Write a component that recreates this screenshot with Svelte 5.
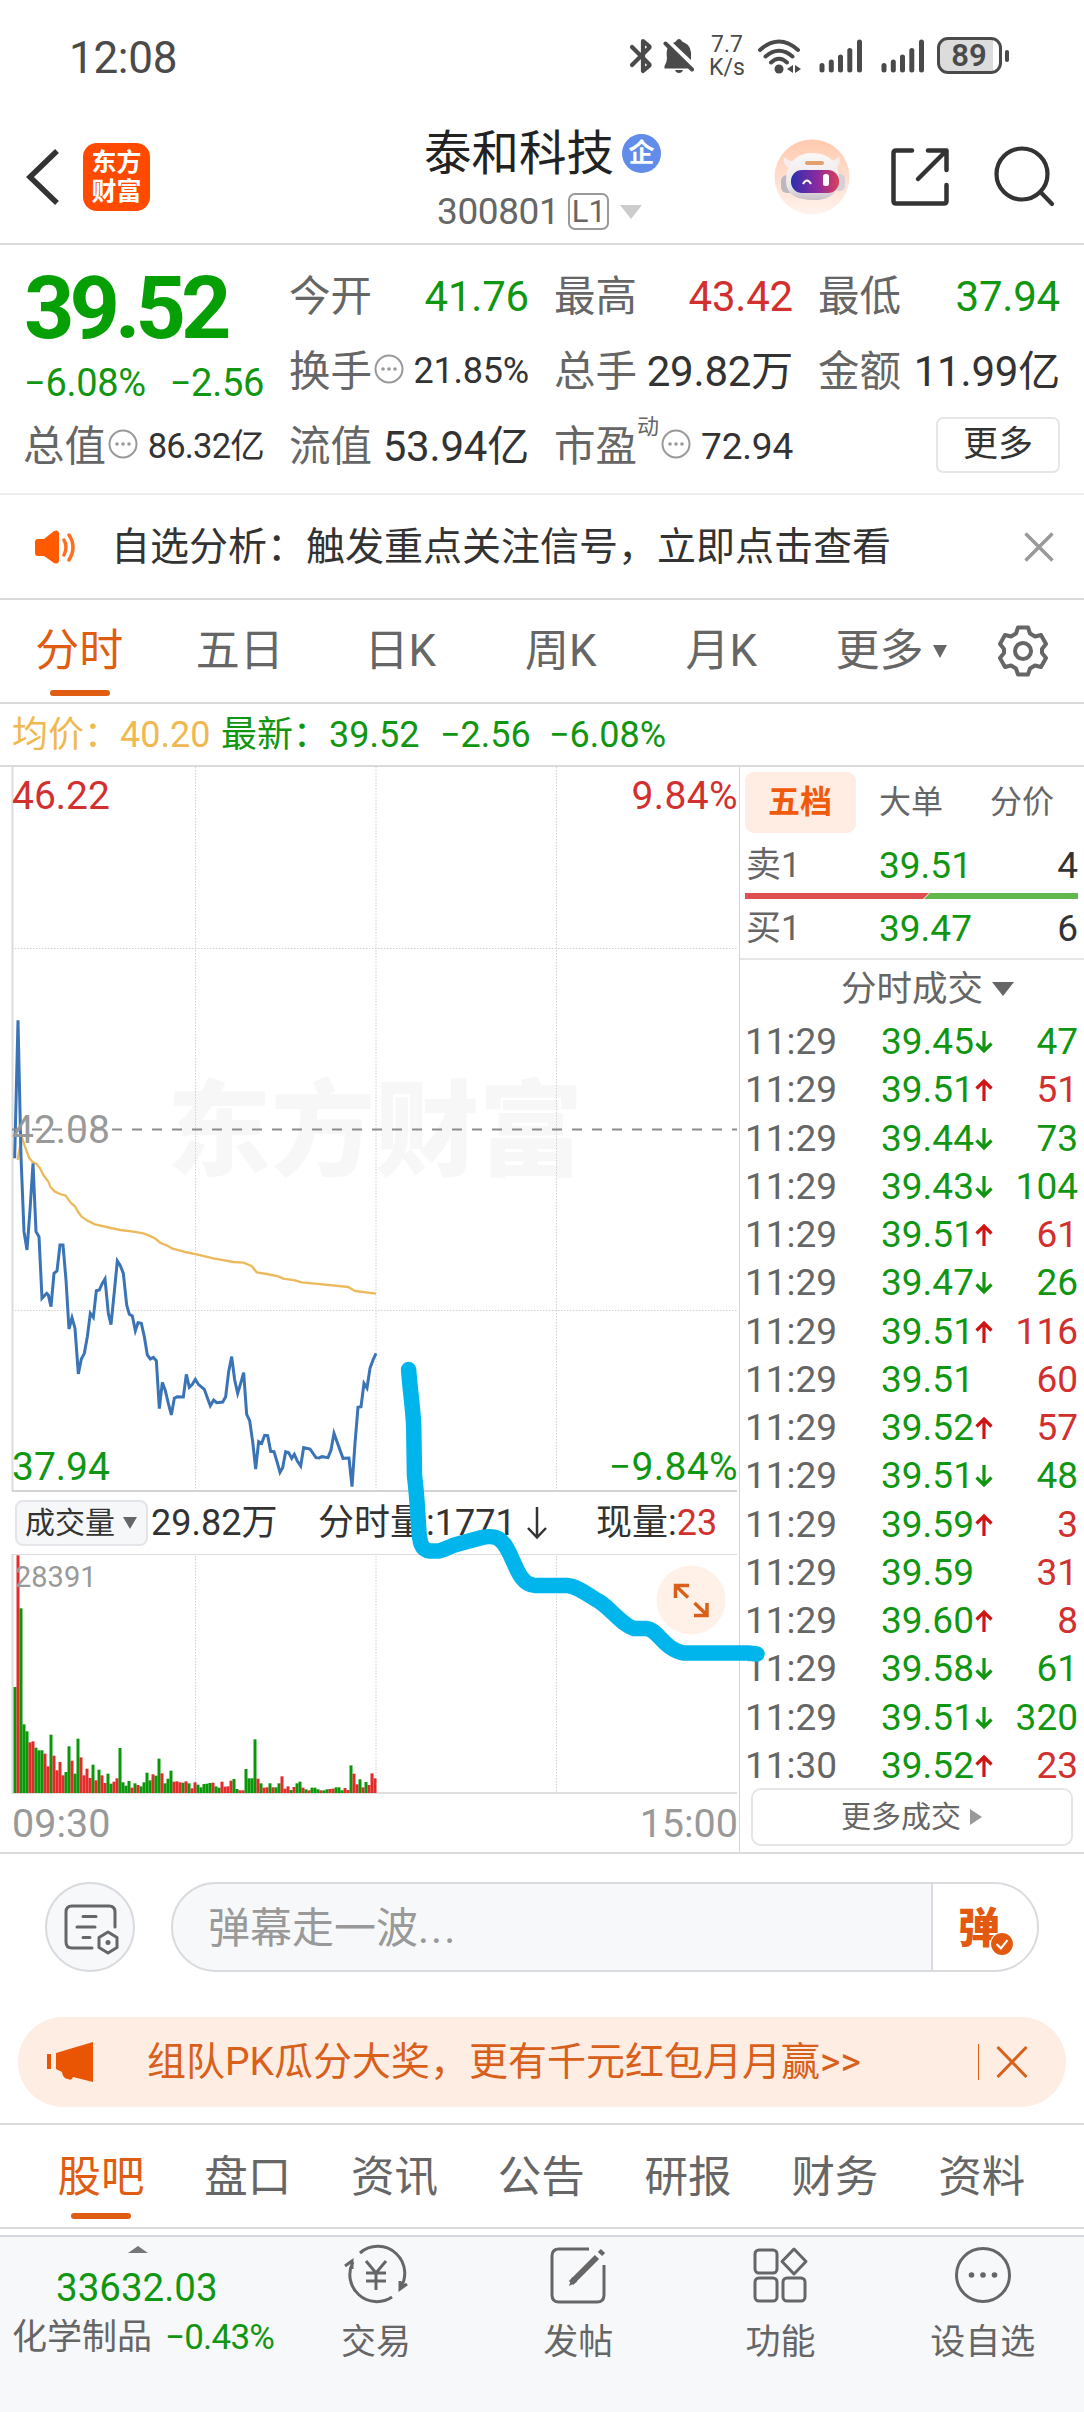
<script lang="ts">
    type Trade = [string, string, string, string, string];

    const stats = [
        { label: '今开', value: '41.76', color: 'down' },
        { label: '最高', value: '43.42', color: 'up' },
        { label: '最低', value: '37.94', color: 'down' },
        { label: '换手', value: '21.85%', color: 'small', info: true },
        { label: '总手', value: '29.82万', color: '' },
        { label: '金额', value: '11.99亿', color: '' }
    ];

    const periods = ['分时', '五日', '日K', '周K', '月K'];
    const sections = ['股吧', '盘口', '资讯', '公告', '研报', '财务', '资料'];

    // time, price, direction, volume, volume color
    const trades: Trade[] = [
        ['11:29', '39.45', 'd', '47', 'down'],
        ['11:29', '39.51', 'u', '51', 'up'],
        ['11:29', '39.44', 'd', '73', 'down'],
        ['11:29', '39.43', 'd', '104', 'down'],
        ['11:29', '39.51', 'u', '61', 'up'],
        ['11:29', '39.47', 'd', '26', 'down'],
        ['11:29', '39.51', 'u', '116', 'up'],
        ['11:29', '39.51', '', '60', 'up'],
        ['11:29', '39.52', 'u', '57', 'up'],
        ['11:29', '39.51', 'd', '48', 'down'],
        ['11:29', '39.59', 'u', '3', 'up'],
        ['11:29', '39.59', '', '31', 'up'],
        ['11:29', '39.60', 'u', '8', 'up'],
        ['11:29', '39.58', 'd', '61', 'down'],
        ['11:29', '39.51', 'd', '320', 'down'],
        ['11:30', '39.52', 'u', '23', 'up']
    ];

    // both lines are stored at three units per pixel
    const priceLine = '44,535 54,121 63,530 72,755 81,810 90,690 99,550 108,755 117,770 126,955 140,940 145,945 153,980 162,880 171,873 180,795 189,795 198,900 207,1047 216,1013 225,1045 235,1182 244,1137 253,1120 262,1070 271,1000 280,1012 289,932 298,930 306,912 315,897 325,1000 333,1034 343,935 352,843 361,857 370,880 380,975 388,1003 397,1008 406,1052 414,1028 424,1030 433,1070 442,1125 451,1137 460,1132 469,1142 478,1286 487,1207 496,1232 505,1270 514,1305 523,1255 532,1250 550,1251 559,1183 568,1222 577,1213 586,1198 595,1213 613,1228 622,1253 631,1277 641,1260 650,1268 668,1266 677,1250 686,1175 695,1130 704,1200 713,1240 722,1210 731,1178 740,1303 749,1322 758,1385 767,1467 776,1385 785,1390 794,1366 803,1367 812,1414 822,1415 831,1445 840,1477 848,1463 857,1415 866,1418 875,1435 883,1423 892,1443 902,1458 911,1403 930,1407 948,1433 957,1434 966,1430 984,1433 993,1410 1002,1360 1011,1385 1029,1435 1047,1434 1056,1520 1065,1390 1074,1282 1083,1280 1092,1210 1101,1224 1110,1165 1119,1140 1128,1120';
    const avgLine = '53,540 60,500 65,470 75,500 88,535 97,545 110,552 120,565 130,585 145,605 152,622 165,635 180,642 197,647 212,668 225,679 235,697 245,710 262,722 285,733 320,741 360,750 400,755 430,760 448,767 465,775 482,789 500,796 518,806 555,816 590,823 640,835 700,846 730,848 755,858 770,877 800,882 835,889 850,896 885,901 905,907 945,911 1045,921 1065,933 1128,941';

    const volumes = 'g318 r713 g554 g206 g185 r152 r155 g136 g128 g128 r118 r80 g175 r112 r68 r93 r53 g63 g140 r97 g58 g163 r107 r53 r73 r45 g85 r38 g70 r53 r30 g58 g28 r34 r44 g135 g32 g22 g36 r16 g29 r24 g20 g32 g61 g38 r56 g52 g103 r59 g29 g43 g67 r34 r35 r32 g31 r35 g29 r14 r32 g25 g17 g27 g28 g30 r31 g20 g16 r34 r19 r20 r37 g42 g12 r8 r8 g72 g44 g44 g161 r43 g29 r16 r17 g29 r17 g17 g29 r50 r13 r20 g9 r18 g29 g34 r16 g11 r8 g16 g16 g11 r8 g8 g11 r12 r13 g17 g17 g8 r15 r9 g83 r58 r26 g41 r17 g33 r24 r59 r44'
        .split(' ')
        .map((v, i) => ({
            x: 13.5 + i * 3,
            h: Number(v.slice(1)) / 3,
            fill: v[0] === 'g' ? '#0a980a' : '#e32b2b'
        }));
</script>

{#snippet info()}
    <svg class="info" width="30" height="30" viewBox="0 0 30 30">
        <circle cx="15" cy="15" r="13.5" fill="none" stroke="#999" stroke-width="2" />
        <circle cx="9" cy="15" r="1.8" fill="#999" />
        <circle cx="15" cy="15" r="1.8" fill="#999" />
        <circle cx="21" cy="15" r="1.8" fill="#999" />
    </svg>
{/snippet}

{#snippet signal()}
    <svg width="44" height="34" viewBox="0 0 44 34" stroke="#4a4a4a" stroke-width="5" stroke-linecap="round">
        <path d="M3 26.500V31M12.300 23V31M21.500 18V31M30.800 11.500V31M40.500 3V31" />
    </svg>
{/snippet}

<main>
    <div class="statusbar">
        <span class="clock">12:08</span>
        <div class="status-icons">
            <svg class="bt" width="24" height="36" viewBox="0 0 24 36" fill="none" stroke="#4a4a4a" stroke-width="4.200" stroke-linecap="round" stroke-linejoin="round">
                <path d="M3 9L20 26Q21 27 20 28L14 33V3L20 8Q21 9 20 10L3 27" />
            </svg>
            <svg class="bell" width="32" height="36" viewBox="0 0 32 36">
                <path d="M5 9Q3 13 4 20Q4 24 1.500 28V30.500H27Z" fill="#4a4a4a" />
                <path d="M10 5Q13 4 14 2Q16 0 18 2Q19 4 22 5Q29 8 28 20V22Z" fill="#4a4a4a" />
                <path d="M12 32H20Q19 35 16 35Q13 35 12 32Z" fill="#4a4a4a" />
                <path d="M2.500 5.500L29 31.500" stroke="#4a4a4a" stroke-width="4" stroke-linecap="round" />
            </svg>
            <div class="speed"><span>7.7</span><span>K/s</span></div>
            <svg class="wifi" width="46" height="36" viewBox="0 0 46 36" fill="none" stroke="#4a4a4a" stroke-width="4" stroke-linecap="round">
                <path d="M3 12Q22 -5 41 12M8.500 18.500Q22 7 35.500 18.500M14 24.500Q22 17 30 24.500" />
                <circle cx="22" cy="31" r="4.500" fill="#4a4a4a" stroke="none" />
                <path d="M30 31L36 27V35ZM38 27L44 31L38 35Z" fill="#4a4a4a" stroke="none" />
            </svg>
            <span class="sig1">{@render signal()}</span>
            <span class="sig2">{@render signal()}</span>
            <div class="battery"><span>89</span></div>
            <i class="nub"></i>
        </div>
    </div>

    <header>
        <svg class="back" width="36" height="60" viewBox="0 0 36 60" fill="none" stroke="#333" stroke-width="5.500">
            <path d="M33 4L6 30L33 56" />
        </svg>
        <div class="logo"><span>东方</span><span>财富</span></div>
        <div class="title">
            <div class="name">泰和科技<b>企</b></div>
            <div class="code">300801<em>L1</em><i></i></div>
        </div>
        <svg class="robot" width="76" height="76" viewBox="0 0 76 76">
            <defs>
                <linearGradient id="halo" x1="0" y1="0" x2="0" y2="1">
                    <stop offset="0" stop-color="#ffc9ae" />
                    <stop offset="1" stop-color="#fff3ed" />
                </linearGradient>
                <linearGradient id="visor" x1="0" y1="0" x2="1" y2="0">
                    <stop offset="0" stop-color="#2b2fae" />
                    <stop offset=".55" stop-color="#8b2aa0" />
                    <stop offset="1" stop-color="#dc4058" />
                </linearGradient>
                <linearGradient id="shell" x1="0" y1="0" x2="0" y2="1">
                    <stop offset="0" stop-color="#fbf8f8" />
                    <stop offset=".7" stop-color="#eae6ea" />
                    <stop offset="1" stop-color="#c9c0c6" />
                </linearGradient>
            </defs>
            <circle cx="38" cy="38" r="37.500" fill="url(#halo)" />
            <path d="M10 18Q8 26 17 31L24 22Q14 23 10 18ZM65 17Q68 26 60 31L52 21Q62 23 65 17Z" fill="#f6eeee" />
            <rect x="7" y="36" width="14" height="18" rx="6" fill="#bdb7c0" />
            <rect x="60" y="35" width="11" height="17" rx="5" fill="#d6cfd5" />
            <path d="M38 14C56 14 65 25 65 40C65 54 56 61 40 61C22 61 12 55 12 42C12 25 22 14 38 14Z" fill="url(#shell)" />
            <rect x="17" y="31" width="48" height="23" rx="11" fill="url(#visor)" />
            <path d="M29 45Q33 38 37 45" fill="none" stroke="#fff" stroke-width="2" />
            <rect x="49" y="35" width="6" height="12" rx="2.500" fill="#fff" />
            <rect x="31" y="22" width="19" height="4" rx="2" fill="#e3a06c" />
        </svg>
        <svg class="share" width="60" height="60" viewBox="0 0 60 60" fill="none" stroke="#333" stroke-width="4.500" stroke-linecap="round" stroke-linejoin="round">
            <path d="M22 3.500H6Q3.500 3.500 3.500 6V54Q3.500 56.500 6 56.500H54Q56.500 56.500 56.500 54V38" />
            <path d="M38 3.500H56.500V23M56 4L28 32" />
        </svg>
        <svg class="search" width="62" height="62" viewBox="0 0 62 62" fill="none" stroke="#333" stroke-width="4.200" stroke-linecap="round">
            <circle cx="28" cy="28" r="25.500" />
            <path d="M46.500 46L58 58" />
        </svg>
    </header>

    <section class="quote">
        <div class="price">
            <div class="last">39.52</div>
            <div class="change"><span>−6.08%</span><span>−2.56</span></div>
        </div>
        {#each stats as s}
            <div class="stat">
                <label>{s.label}</label>
                {#if s.info}{@render info()}{/if}
                <span class={s.color}>{s.value}</span>
            </div>
        {/each}
        <div class="stat"><label>总值</label>{@render info()}<span class="small cap">86.32亿</span></div>
        <div class="stat"><label>流值</label><span>53.94亿</span></div>
        <div class="stat"><label>市盈</label><sup>动</sup>{@render info()}<span class="small pe">72.94</span></div>
        <div class="stat"><button class="more">更多</button></div>
    </section>

    <section class="notice">
        <svg width="46" height="38" viewBox="0 0 46 38">
            <path d="M2 14Q2 11 5 11H11L21 3Q26 1 26 6V32Q26 37 21 35L11 28H5Q2 28 2 25Z" fill="#ff5a00" />
            <path d="M31 12Q35 19 31 27M36 7Q44 19 36 32" fill="none" stroke="#ff6f22" stroke-width="3.500" stroke-linecap="round" />
        </svg>
        <p>自选分析：触发重点关注信号，立即点击查看</p>
        <svg width="30" height="30" viewBox="0 0 30 30" stroke="#999" stroke-width="3.500">
            <path d="M1.500 1.500L28.500 28.500M28.500 1.500L1.500 28.500" />
        </svg>
    </section>

    <nav class="periods">
        {#each periods as p, i}
            <span class:active={i === 0}>{p}</span>
        {/each}
        <span class="drop">更多<i></i></span>
        <svg width="54" height="54" viewBox="0 0 54 54" fill="none" stroke="#666" stroke-width="4" stroke-linejoin="round">
            <path d="M22 3.500H32L34 9.500L39 12.500L45 11L50 20L46 25V29L50 34L45 43L39 41.500L34 44.500L32 50.500H22L20 44.500L15 41.500L9 43L4 34L8 29V25L4 20L9 11L15 12.500L20 9.500Z" />
            <circle cx="27" cy="27" r="8" />
        </svg>
    </nav>

    <div class="legend">
        <span class="avg">均价：</span><span class="avg v1">40.20</span>
        <span class="v2">最新：</span><span class="v3">39.52</span><span class="v4">−2.56</span><span class="v5">−6.08%</span>
    </div>

    <div class="board">
        <div class="left">
            <svg class="chart" width="739" height="725" viewBox="0 0 739 725">
                <text class="mark" x="167" y="401">东方财富</text>
                <g stroke="#d0d0d0" stroke-width="1" stroke-dasharray="1.500 1.500">
                    <path d="M195.500 0V724M376 0V724M556.500 0V724M12 181.500H737M12 543.500H737" />
                </g>
                <path d="M12.500 0V724" stroke="#dcdcdc" stroke-width="2" />
                <path d="M12 724H737" stroke="#d3d3d3" stroke-width="2" />
                <g transform="translate(0 213) scale(.33333)" fill="none">
                    <polyline points={avgLine} stroke="#ecb95c" stroke-width="7" stroke-linejoin="round" />
                    <polyline points={priceLine} stroke="#3a74b6" stroke-width="9" />
                </g>
                <path d="M12 362.500H737" stroke="#8c8c8c" stroke-width="2" stroke-dasharray="10 10" />
                <text class="up" x="12" y="41.500">46.22</text>
                <text class="up pct" x="738" y="41.500" text-anchor="end">9.84%</text>
                <text class="mid" x="12" y="376">42.08</text>
                <text class="down" x="12" y="712.500">37.94</text>
                <text class="down pct" x="738" y="712.500" text-anchor="end">−9.84%</text>
            </svg>
            <div class="volhead">
                <button>成交量<i></i></button>
                <span class="total">29.82万</span>
                <span class="minute">分时量:<u>1771</u></span>
                <svg width="22" height="34" viewBox="0 0 22 34" fill="none" stroke="#333" stroke-width="2.500">
                    <path d="M11 1V31M2 22L11 31.500L20 22" />
                </svg>
                <span class="now">现量:<u class="up">23</u></span>
            </div>
            <div class="volume">
                <svg width="739" height="241" viewBox="0 0 739 241">
                    <path d="M195.500 2V239M376 2V239M556.500 2V239" stroke="#d0d0d0" stroke-dasharray="1.500 1.500" />
                    <path d="M12.500 0V240" stroke="#dcdcdc" stroke-width="2" />
                    <path d="M12 .5H737" stroke="#dcdcdc" />
                    <path d="M12 239H737" stroke="#dedede" stroke-width="2" />
                    {#each volumes as v}
                        <rect x={v.x} y={239 - v.h} width="3" height={v.h} fill={v.fill} />
                    {/each}
                    <text x="15" y="32.500">28391</text>
                </svg>
                <svg class="expand" width="70" height="70" viewBox="0 0 70 70">
                    <circle cx="35" cy="35" r="34.500" fill="#fff0e8" />
                    <path d="M19.500 33V20.500H33M20 21L32 32.500M51 38V50.500H38M51 50L38.500 38" fill="none" stroke="#d9601a" stroke-width="3.500" />
                </svg>
            </div>
            <div class="times"><span>09:30</span><span>15:00</span></div>
        </div>

        <aside>
            <div class="levels">
                <b>五档</b><span>大单</span><span>分价</span>
            </div>
            <div class="order ask"><label>卖1</label><span class="down">39.51</span><span class="qty">4</span></div>
            <svg class="ratio" width="333" height="6" viewBox="0 0 333 6">
                <path d="M0 0H184L178 6H0Z" fill="#dd4f51" />
                <path d="M185 0H333V6H179Z" fill="#62b74d" />
            </svg>
            <div class="order bid"><label>买1</label><span class="down">39.47</span><span class="qty">6</span></div>
            <div class="deals">分时成交<i></i></div>
            <div class="trades">
                {#each trades as [time, price, dir, qty, color]}
                    <div class="trade">
                        <span class="time">{time}</span>
                        <span class="down">{price}</span>
                        <svg width="18" height="24" viewBox="0 0 18 24" fill="none" stroke-width="3.200">
                            {#if dir === 'u'}
                                <path d="M9 23V3M1.500 10.500L9 3L16.500 10.500" stroke="#d01414" />
                            {:else if dir === 'd'}
                                <path d="M9 1V21M1.500 13.500L9 21L16.500 13.500" stroke="#119611" />
                            {/if}
                        </svg>
                        <span class="qty {color}">{qty}</span>
                    </div>
                {/each}
            </div>
            <button class="all">更多成交<i></i></button>
        </aside>

        <svg class="stroke" width="380" height="310" viewBox="395 1355 380 310">
            <path d="M408.600 1369.500C410 1390 413 1408 413.700 1426L414.500 1476C417 1495 417.500 1510 418.500 1525C419.500 1543 421 1550 430 1551H438C444 1550 450 1546 458 1544L482 1537.500C489 1536 494 1536 499 1539C514 1549 515 1585 535 1585.500H567C577 1586 588 1595 600 1602C612 1610 622 1625 634 1628.500H646C658 1629 664 1650 684 1653H748L757 1654" />
        </svg>
    </div>

    <section class="danmu">
        <div class="round">
            <svg width="56" height="54" viewBox="0 0 56 54" fill="none" stroke="#666" stroke-width="3" stroke-linecap="round">
                <path d="M29 46H9Q3 46 3 40V10Q3 4 9 4H46Q52 4 52 10V25" />
                <path d="M20 14.500H33M14 25H32M20 35.500H27" />
                <path d="M45 30L54 35.500V45.500L45 51L36 45.500V35.500Z" stroke-linejoin="round" />
                <circle cx="45" cy="40.500" r="2.500" fill="#666" stroke="none" />
            </svg>
        </div>
        <div class="field">
            <span>弹幕走一波<u>...</u></span>
            <div class="toggle">
                <b>弹</b>
                <svg width="24" height="24" viewBox="0 0 22 22">
                    <circle cx="11" cy="11" r="11" fill="#fff" />
                    <circle cx="11" cy="11" r="10" fill="#e2590f" />
                    <path d="M6 11L10 15L16 7.500" fill="none" stroke="#fff" stroke-width="2" />
                </svg>
            </div>
        </div>
    </section>

    <section class="banner">
        <svg width="46" height="42" viewBox="0 0 46 42" fill="#ea5504">
            <path d="M0 13H4V28H0ZM9 12L46 1V41L26 36Q25 40 21 38Q16 38 15 31L9 28Z" />
        </svg>
        <p>组队PK瓜分大奖，更有千元红包月月赢&gt;&gt;</p>
        <i></i>
        <svg class="close" width="32" height="34" viewBox="0 0 32 34" stroke="#d9601a" stroke-width="3">
            <path d="M1.500 2L30.500 32M30.500 2L1.500 32" />
        </svg>
    </section>

    <nav class="sections">
        {#each sections as s, i}
            <span class:active={i === 0}>{s}</span>
        {/each}
    </nav>

    <footer>
        <div class="index">
            <i></i>
            <strong>33632.03</strong>
            <div><span>化学制品</span><em>−0.43%</em></div>
        </div>
        <div class="tool">
            <svg width="68" height="62" viewBox="0 0 68 62" fill="none" stroke="#666" stroke-width="3">
                <path d="M18 9A27 27 0 0 1 57 46M50 53A27 27 0 0 1 11 18M3 22L10 17V25M65 40L58 45V37" />
                <path d="M24 17L34 29L44 17M34 29V46M24 29H44M24 37H44" />
            </svg>
            <span>交易</span>
        </div>
        <div class="tool">
            <svg width="62" height="62" viewBox="0 0 62 62" fill="none" stroke="#666" stroke-width="3">
                <path d="M42 5H12Q5 5 5 12V51Q5 58 12 58H50Q57 58 57 51V21" />
                <path d="M24 39L50 13M53 10L56 7" stroke-width="6" />
                <path d="M25 33L22 42L30 38Z" fill="#666" stroke="none" />
            </svg>
            <span>发帖</span>
        </div>
        <div class="tool">
            <svg width="62" height="62" viewBox="0 0 62 62" fill="none" stroke="#666" stroke-width="3" stroke-linejoin="round">
                <rect x="6" y="6" width="22" height="23" rx="4" />
                <rect x="6" y="34" width="22" height="23" rx="4" />
                <rect x="34" y="34" width="22" height="23" rx="4" />
                <path d="M45 5L57 17.500L45 30L33 17.500Z" />
            </svg>
            <span>功能</span>
        </div>
        <div class="tool">
            <svg width="62" height="62" viewBox="0 0 62 62">
                <circle cx="31" cy="31" r="26.500" fill="none" stroke="#666" stroke-width="3" />
                <g fill="#666">
                    <circle cx="19.500" cy="31" r="2.800" />
                    <circle cx="31" cy="31" r="2.800" />
                    <circle cx="42.500" cy="31" r="2.800" />
                </g>
            </svg>
            <span>设自选</span>
        </div>
    </footer>
</main>

<style>
    :global(body) {
        background: #fff;
    }
    main {
        width: 1084px;
        height: 2412px;
        overflow: hidden;
        display: flex;
        flex-direction: column;
        font-family: Roboto, "Noto Sans CJK SC", sans-serif;
        color: #333;
        white-space: nowrap;
    }
    main * {
        box-sizing: border-box;
    }
    svg {
        display: block;
        flex: none;
    }
    i, em {
        font-style: normal;
    }
    u {
        text-decoration: none;
    }
    p {
        margin: 0;
    }
    button {
        font-family: inherit;
        color: inherit;
        padding: 0;
        background: none;
    }
    .up {
        color: #d2302f;
        fill: #d2302f;
    }
    .down {
        color: #119611;
        fill: #119611;
    }

    .statusbar {
        height: 110px;
        display: flex;
        justify-content: space-between;
        padding: 37px 75px 0 69px;
        color: #4a4a4a;
    }
    .clock {
        font-size: 44px;
        line-height: 42px;
        letter-spacing: -0.300px;
    }
    .status-icons {
        display: flex;
        align-items: center;
        height: 37px;
    }
    .bell {
        margin-left: 10px;
    }
    .speed {
        width: 36px;
        margin-left: 14px;
        display: flex;
        flex-direction: column;
        align-items: center;
        font-size: 23px;
        line-height: 23px;
    }
    .wifi {
        margin-left: 12px;
    }
    .sig1 {
        margin-left: 16px;
    }
    .sig2 {
        margin-left: 18px;
    }
    .battery {
        width: 65px;
        height: 37px;
        margin-left: 12px;
        border: 3px solid #4a4a4a;
        border-radius: 11px;
        padding: 0 1px 0 0;
        background: linear-gradient(90deg, #dcdcdc 53px, #fff 53px);
        text-align: center;
        font-size: 31px;
        font-weight: 600;
        line-height: 32px;
    }
    .nub {
        width: 4px;
        height: 12px;
        margin-left: 3px;
        border-radius: 2px;
        background: #4a4a4a;
    }

    header {
        height: 135px;
        display: flex;
        align-items: center;
        border-bottom: 2px solid #dadada;
        padding-left: 24px;
    }
    .back {
        margin-right: 23px;
    }
    .logo {
        width: 67px;
        height: 68px;
        border-radius: 14px;
        background: #ff4a00;
        color: #fff;
        font-size: 25px;
        font-weight: 700;
        line-height: 29px;
        display: flex;
        flex-direction: column;
        align-items: center;
        padding-top: 5px;
    }
    .title {
        width: 260px;
        margin-left: 274px;
        height: 120px;
        display: flex;
        flex-direction: column;
    }
    .name {
        display: flex;
        align-items: center;
        height: 52px;
        margin-top: 11px;
        font-size: 47.500px;
        line-height: 52px;
        color: #222;
    }
    .name b {
        width: 39px;
        height: 39px;
        margin-left: 8px;
        border-radius: 50%;
        background: #618ce9;
        color: #fff;
        font-size: 26px;
        line-height: 39px;
        text-align: center;
    }
    .code {
        display: flex;
        align-items: center;
        margin: 13px 0 0 13px;
        font-size: 37px;
        line-height: 38px;
        color: #666;
        letter-spacing: -0.400px;
    }
    .code em {
        width: 41px;
        height: 37px;
        margin-left: 9px;
        border: 2px solid #999;
        border-radius: 7px;
        font-size: 31px;
        line-height: 34px;
        text-align: center;
        letter-spacing: 0;
    }
    .code i {
        margin-left: 11px;
        border: 11px solid transparent;
        border-top: 14px solid #ccc;
        border-bottom: 0;
    }
    .robot {
        margin-left: 90px;
    }
    .share {
        margin-left: 40px;
    }
    .search {
        margin-left: 44px;
    }

    .quote {
        height: 250px;
        border-bottom: 2px solid #ededed;
        padding: 14px 24px 0 24px;
        display: grid;
        grid-template-columns: 240px 239px 238px 241px;
        grid-template-rows: 75px 75px 75px;
        column-gap: 26px;
    }
    .price {
        grid-row: 1 / 3;
        color: #06a006;
    }
    .last {
        height: 97px;
        font-size: 88px;
        font-weight: 700;
        line-height: 98px;
        letter-spacing: -5px;
        color: #06a006;
    }
    .change {
        display: flex;
        justify-content: space-between;
        font-size: 38px;
        line-height: 54px;
        color: #119611;
        letter-spacing: -0.300px;
    }
    .stat {
        display: flex;
        align-items: center;
        font-size: 42px;
        line-height: 75px;
    }
    .stat label {
        margin-left: -1px;
        font-size: 41.500px;
        color: #666;
    }
    .stat span {
        margin-left: auto;
        letter-spacing: -0.200px;
    }
    .stat .small {
        font-size: 36px;
    }
    .stat .cap {
        font-size: 34.500px;
        letter-spacing: -0.800px;
    }
    .stat .pe {
        font-size: 37px;
    }
    .stat .info {
        margin: -5px 0 0 2px;
    }
    sup {
        align-self: flex-start;
        width: 22px;
        font-size: 22px;
        line-height: 36px;
        color: #666;
    }
    .more {
        width: 124px;
        height: 56px;
        margin: -4px 0 0 auto;
        border: 2px solid #e6e6e6;
        border-radius: 7px;
        font-size: 35px;
        line-height: 48px;
    }

    .notice {
        height: 105px;
        border-bottom: 2px solid #dadada;
        display: flex;
        align-items: center;
        padding: 0 30px 0 33px;
    }
    .notice p {
        margin: 0 auto 0 32px;
        font-size: 39px;
        line-height: 100px;
    }

    .periods {
        height: 104px;
        border-bottom: 2px solid #dadada;
        display: flex;
        align-items: center;
        font-size: 44px;
        line-height: 106px;
        color: #666;
    }
    .periods span {
        width: 160.500px;
        text-align: center;
        text-indent: -2px;
    }
    .active {
        position: relative;
        color: #df5d12;
    }
    .active::after {
        content: "";
        position: absolute;
        left: 50%;
        bottom: 8px;
        width: 60px;
        height: 6px;
        margin-left: -30px;
        border-radius: 3px;
        background: #df5d12;
    }
    .periods .drop {
        width: 160px;
        margin: 0 0 0 33px;
        display: flex;
        align-items: center;
        text-indent: 0;
    }
    .drop i {
        margin-left: 9px;
        border: 7.500px solid transparent;
        border-top: 13px solid #666;
        border-bottom: 0;
    }

    .legend {
        height: 63px;
        border-bottom: 2px solid #dadada;
        display: flex;
        padding-left: 12px;
        font-size: 36px;
        line-height: 63px;
        color: #119611;
    }
    .avg {
        color: #efb850;
    }
    .v1 {
        width: 101px;
    }
    .v3 {
        width: 111px;
    }
    .v4 {
        width: 109px;
    }

    .board {
        position: relative;
        height: 1087px;
        border-bottom: 2px solid #dadada;
        display: flex;
    }
    .left {
        width: 740px;
        border-right: 1px solid #d5d5d5;
    }
    .chart text {
        font-size: 39px;
    }
    .chart .pct {
        letter-spacing: 0.400px;
    }
    .chart .mid {
        fill: #999;
    }
    .chart .mark {
        font-size: 104px;
        font-weight: 900;
        fill: #f7f7f7;
    }
    .volhead {
        height: 62px;
        display: flex;
        align-items: center;
        padding-left: 15px;
        font-size: 36px;
        line-height: 60px;
    }
    .volhead button {
        width: 133px;
        height: 46px;
        border: 2px solid #e3e5e8;
        border-radius: 8px;
        background: #f6f7f9;
        display: flex;
        align-items: center;
        padding-left: 8px;
        font-size: 30px;
        line-height: 42px;
    }
    .volhead i {
        margin-left: 8px;
        border: 7.500px solid transparent;
        border-top: 12px solid #666;
        border-bottom: 0;
    }
    .total {
        width: 167px;
        margin-left: 3px;
    }
    .minute {
        width: 208px;
    }
    .now {
        margin-left: 48px;
    }
    .volume {
        position: relative;
        height: 241px;
    }
    .volume text {
        font-size: 29px;
        fill: #999;
    }
    .expand {
        position: absolute;
        left: 656px;
        top: 11px;
    }
    .times {
        display: flex;
        justify-content: space-between;
        padding: 0 1px 0 12px;
        font-size: 39.500px;
        line-height: 58px;
        color: #999;
    }

    aside {
        width: 344px;
        padding: 5px 6px 0 5px;
        font-size: 37px;
        display: flex;
        flex-direction: column;
    }
    .levels {
        height: 61px;
        display: flex;
        align-items: center;
        font-size: 32px;
        line-height: 61px;
        color: #666;
    }
    .levels b, .levels span {
        width: 111px;
        text-align: center;
        text-indent: -1px;
    }
    .levels b {
        border-radius: 9px;
        background: #ffece2;
        color: #f05a0a;
    }
    .order {
        height: 60px;
        display: flex;
        align-items: center;
        line-height: 60px;
    }
    .ask {
        padding-top: 5px;
    }
    .order label {
        width: 134px;
        padding-left: 1px;
        font-size: 35px;
        color: #666;
    }
    .qty {
        margin-left: auto;
    }
    .bid {
        height: 59px;
    }
    .deals {
        height: 60px;
        margin: 0 -6px 0 -5px;
        border-top: 2px solid #e5e5e5;
        display: flex;
        align-items: center;
        padding-left: 101px;
        font-size: 35.500px;
        line-height: 56px;
        color: #666;
    }
    .deals i {
        margin-left: 9px;
        border: 11px solid transparent;
        border-top: 14px solid #666;
        border-bottom: 0;
    }
    .trade {
        height: 48.250px;
        display: flex;
        align-items: center;
        line-height: 48px;
    }
    .time {
        width: 136px;
        color: #666;
    }
    .trade svg {
        margin-left: 1px;
    }
    .all {
        height: 58px;
        margin: -2px 0 0 6px;
        width: 322px;
        border: 2px solid #e5e5e5;
        border-radius: 10px;
        display: flex;
        align-items: center;
        padding-left: 88px;
        font-size: 30px;
        line-height: 54px;
        color: #666;
    }
    .all i {
        margin-left: 9px;
        border: 8.500px solid transparent;
        border-left: 12px solid #999;
        border-right: 0;
    }
    /* freehand line over the chart */
    .stroke {
        position: absolute;
        left: 395px;
        top: 588px;
        fill: none;
        stroke: #00b5ec;
        stroke-width: 15.500px;
        stroke-linecap: round;
        stroke-linejoin: round;
    }

    .danmu {
        height: 163px;
        display: flex;
        align-items: flex-start;
        padding: 28px 45px 0 45px;
    }
    .round {
        width: 90px;
        height: 90px;
        border: 2px solid #d9dbdf;
        border-radius: 50%;
        background: #f7f8fa;
        padding: 18px 0 0 16px;
    }
    .field {
        flex: 1;
        height: 90px;
        margin-left: 36px;
        border: 2px solid #d9dbdf;
        border-radius: 45px;
        background: #f7f8fa;
        overflow: hidden;
        display: flex;
        justify-content: space-between;
        padding-left: 35px;
        font-size: 42px;
        line-height: 89px;
        color: #999;
    }
    .field u {
        letter-spacing: 2px;
    }
    .toggle {
        position: relative;
        width: 106px;
        border-left: 2px solid #d9dbdf;
        background: #fff;
        padding-left: 25px;
        color: #e2590f;
    }
    .toggle b {
        font-weight: 900;
    }
    .toggle svg {
        position: absolute;
        left: 57px;
        top: 48px;
    }

    .banner {
        width: 1048px;
        height: 90px;
        margin: 0 18px 16px;
        border-radius: 45px;
        background: #fdede3;
        display: flex;
        align-items: center;
        padding-left: 29px;
        color: #d9601a;
    }
    .banner p {
        width: 831px;
        margin-left: 54px;
        font-size: 39px;
        line-height: 86px;
    }
    .banner i {
        width: 1px;
        height: 36px;
        background: #d9601a;
    }
    .close {
        margin-left: 17px;
    }

    .sections {
        height: 106px;
        border-top: 2px solid #dadada;
        border-bottom: 2px solid #dadada;
        display: flex;
        padding-left: 28px;
        font-size: 43.500px;
        line-height: 106px;
        color: #666;
    }
    .sections span {
        width: 146.800px;
        height: 102px;
        text-align: center;
        text-indent: -1px;
    }

    footer {
        flex: 1;
        margin-top: 6px;
        border-top: 2px solid #d5d6dc;
        background: #f7f8fa;
        display: flex;
        color: #666;
    }
    .index {
        width: 275px;
        padding: 9px 0 0 12px;
        display: flex;
        flex-direction: column;
    }
    .index i {
        align-self: flex-start;
        margin-left: 116px;
        border: 10px solid transparent;
        border-top: 0;
        border-bottom: 7px solid #777;
    }
    .index strong {
        margin-left: 44px;
        font-size: 38.500px;
        font-weight: 400;
        line-height: 69px;
        color: #119611;
    }
    .index div {
        display: flex;
        gap: 13px;
        font-size: 35px;
        line-height: 31px;
    }
    .index em {
        color: #119611;
        letter-spacing: -0.800px;
    }
    .tool {
        width: 202.200px;
        flex: none;
        display: flex;
        flex-direction: column;
        align-items: center;
        padding-top: 7px;
        font-size: 35px;
    }
    .tool span {
        margin-top: 12px;
        line-height: 50px;
    }
</style>
